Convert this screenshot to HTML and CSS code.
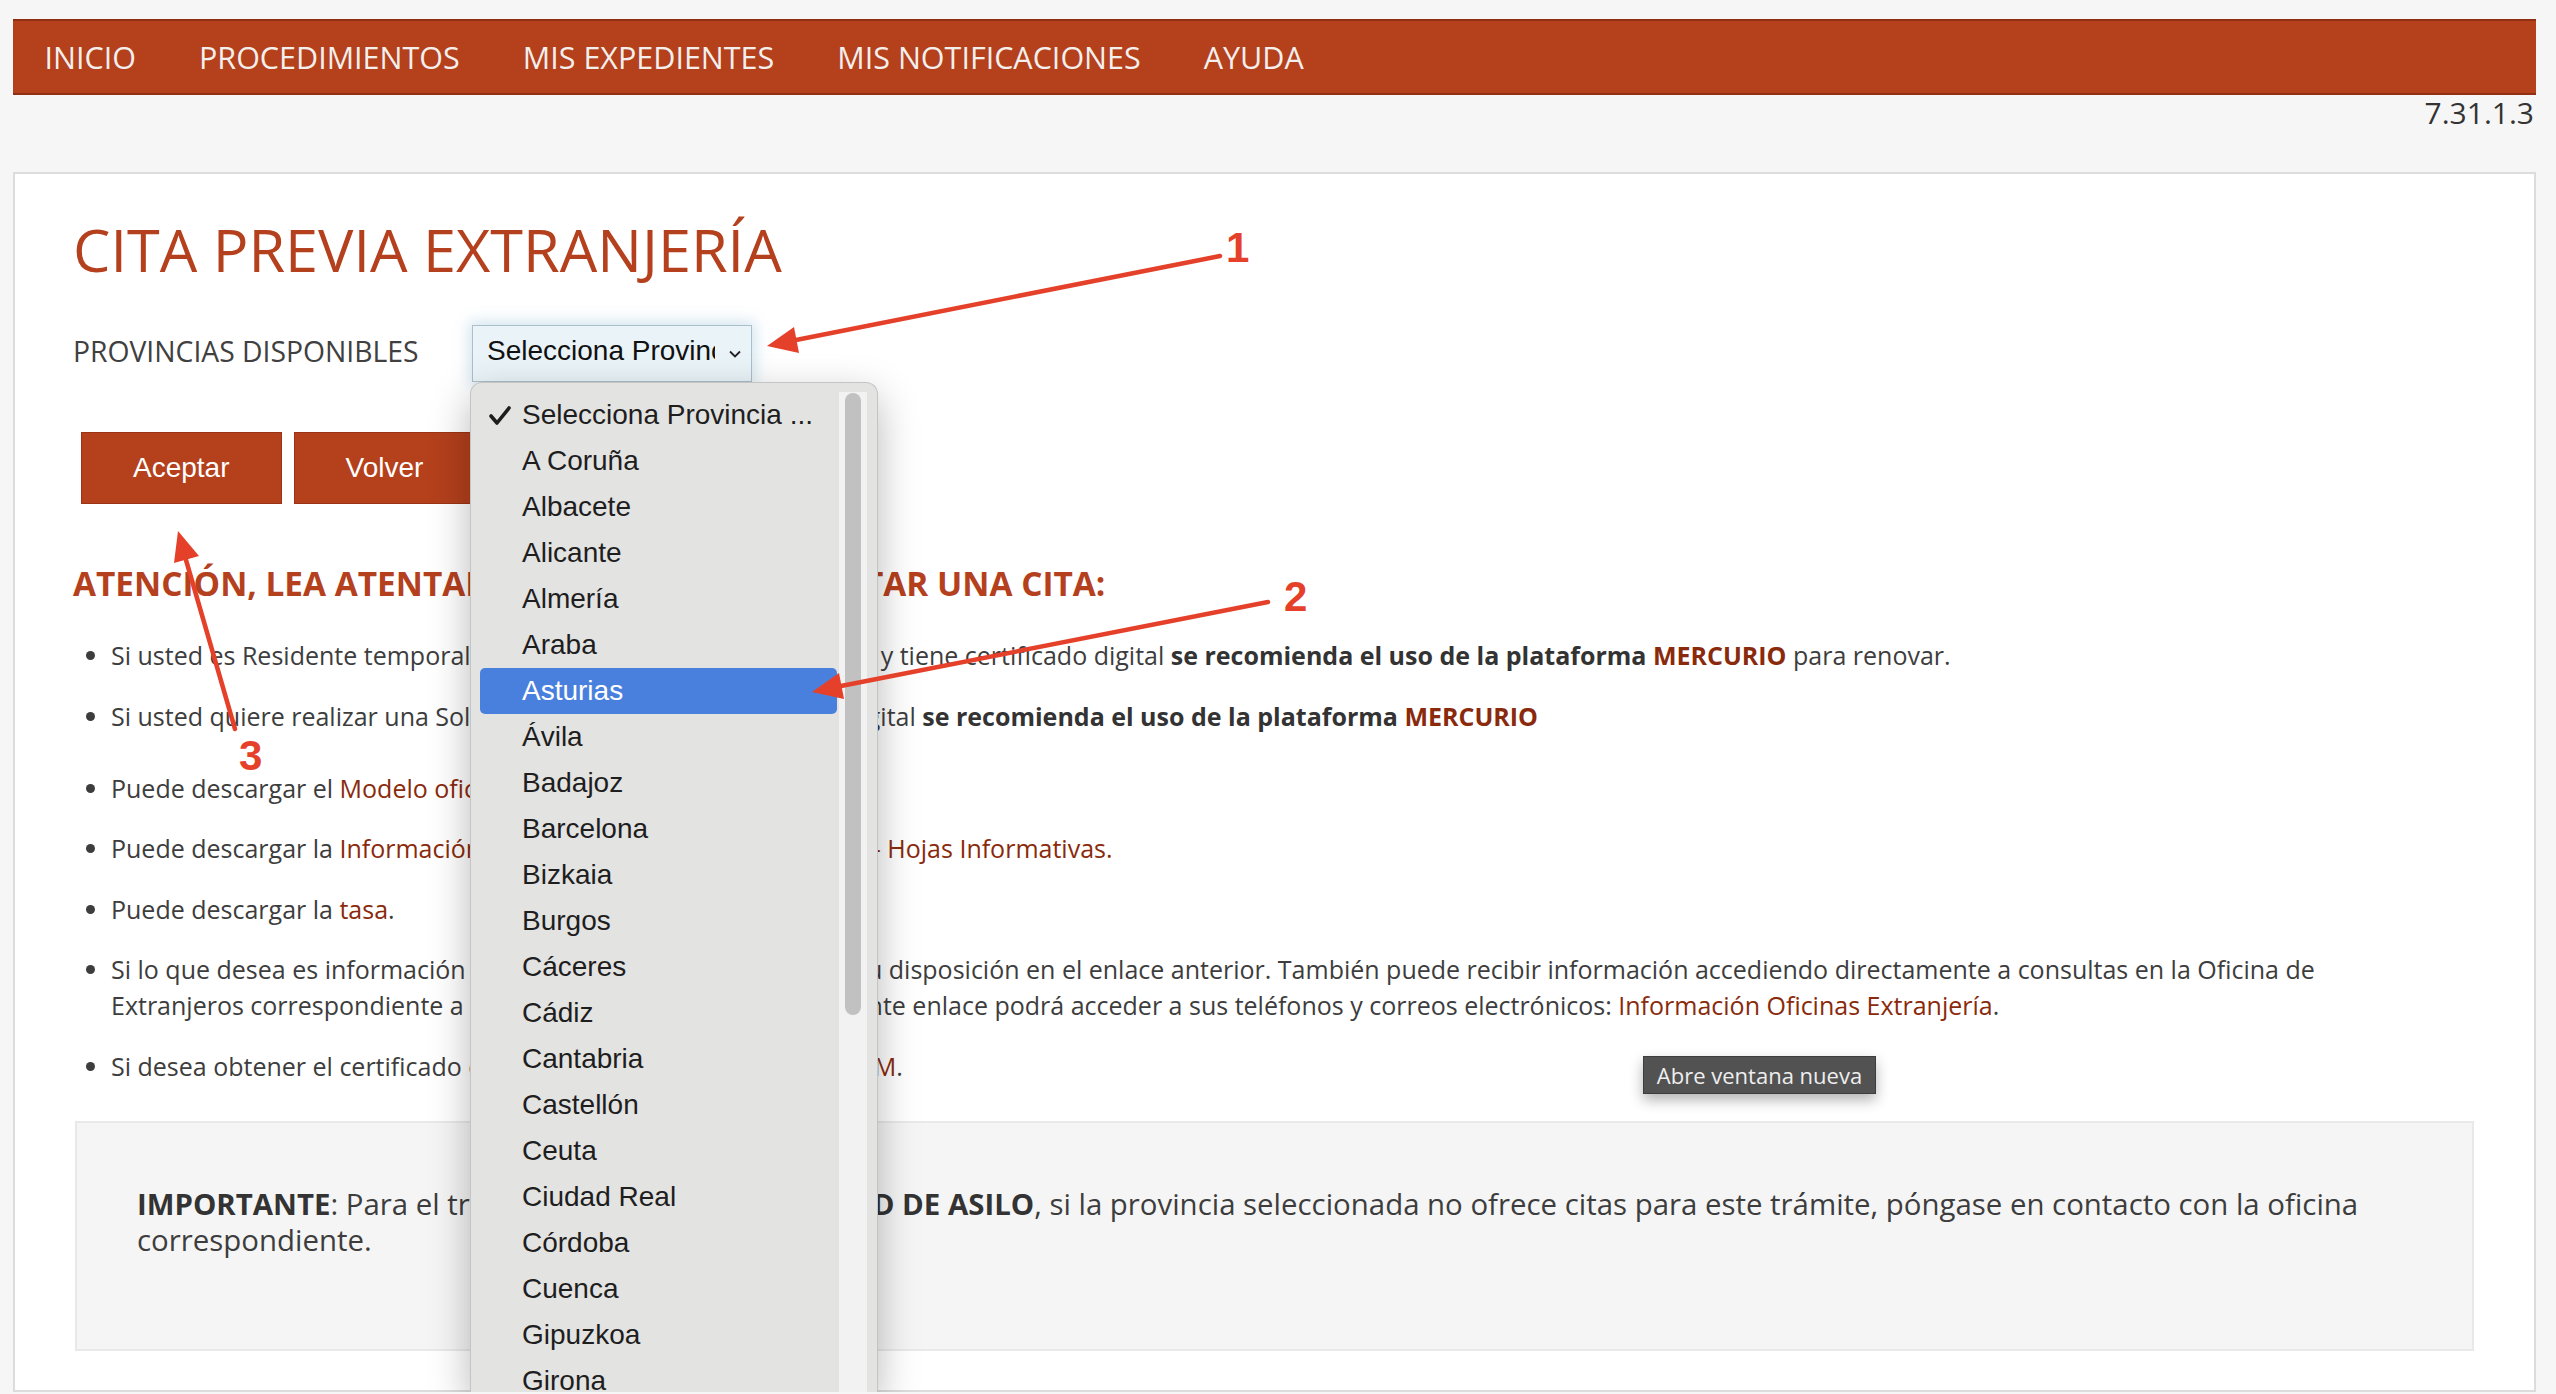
FILE: index.html
```html
<!DOCTYPE html>
<html lang="es">
<head>
<meta charset="utf-8">
<title>Cita Previa Extranjería</title>
<link rel="stylesheet" href="styles.css">
</head>
<body>
<nav class="topnav">
  <ul>
    <li><a href="#">INICIO</a></li>
    <li><a href="#">PROCEDIMIENTOS</a></li>
    <li><a href="#">MIS EXPEDIENTES</a></li>
    <li><a href="#">MIS NOTIFICACIONES</a></li>
    <li><a href="#">AYUDA</a></li>
  </ul>
</nav>
<div class="version">7.31.1.3</div>

<main class="panel">
  <h1 class="title">CITA PREVIA EXTRANJERÍA</h1>

  <div class="form-row">
    <label class="field-label">PROVINCIAS DISPONIBLES</label>
    <div class="select-wrap">
      <div class="select">
        <span class="select-text">Selecciona Provincia ...</span>
        <svg class="chevron" width="12" height="8" viewBox="0 0 12 8"><polyline points="1,1.5 6,6.5 11,1.5" fill="none" stroke="#222" stroke-width="1.8"/></svg>
      </div>
      <div class="popup" role="listbox">
        <ul class="options">
          <li class="option"><svg class="check" width="22" height="19" viewBox="0 0 22 19"><polyline points="2,10 8,17 20,2" fill="none" stroke="#1e1e1e" stroke-width="3.6" stroke-linecap="round" stroke-linejoin="round"/></svg>Selecciona Provincia ...</li>
          <li class="option">A Coruña</li>
          <li class="option">Albacete</li>
          <li class="option">Alicante</li>
          <li class="option">Almería</li>
          <li class="option">Araba</li>
          <li class="option selected">Asturias</li>
          <li class="option">Ávila</li>
          <li class="option">Badajoz</li>
          <li class="option">Barcelona</li>
          <li class="option">Bizkaia</li>
          <li class="option">Burgos</li>
          <li class="option">Cáceres</li>
          <li class="option">Cádiz</li>
          <li class="option">Cantabria</li>
          <li class="option">Castellón</li>
          <li class="option">Ceuta</li>
          <li class="option">Ciudad Real</li>
          <li class="option">Córdoba</li>
          <li class="option">Cuenca</li>
          <li class="option">Gipuzkoa</li>
          <li class="option">Girona</li>
          <li class="option">Granada</li>
        </ul>
        <div class="scroll-track"><div class="scroll-thumb"></div></div>
      </div>
    </div>
  </div>

  <div class="buttons">
    <button class="btn">Aceptar</button>
    <button class="btn">Volver</button>
  </div>

  <h2 class="notice-title">ATENCIÓN, LEA ATENTAMENTE ANTES DE SOLICITAR UNA CITA:</h2>

  <ul class="info-list">
    <li>Si usted es Residente temporal, trabajo por cuenta ajena o propia y tiene certificado digital <strong>se recomienda el uso de la plataforma <a href="#">MERCURIO</a></strong> para renovar.</li>
    <li class="spaced">Si usted quiere realizar una Solicitud inicial, y posee certificado digital <strong>se recomienda el uso de la plataforma <a href="#">MERCURIO</a></strong></li>
    <li>Puede descargar el <a href="#">Modelo oficial de solicitud</a>.</li>
    <li>Puede descargar la <a href="#">Información sobre los trámites de extranjería - Hojas Informativas.</a></li>
    <li>Puede descargar la <a href="#">tasa</a>.</li>
    <li>Si lo que desea es información general sobre trámites la tiene a su disposición en el enlace anterior. También puede recibir información accediendo directamente a consultas en la Oficina de Extranjeros correspondiente a su domicilio. Pulsando en el siguiente enlace podrá acceder a sus teléfonos y correos electrónicos: <a href="#">Información Oficinas Extranjería</a>.</li>
    <li>Si desea obtener el certificado digital podrá acceder a la <a href="#">FNMT-RCM</a>.</li>
  </ul>

  <div class="important">
    <p><strong>IMPORTANTE</strong>: Para el trámite de <strong>POLICÍA - SOLICITUD DE ASILO</strong>, si la provincia seleccionada no ofrece citas para este trámite, póngase en contacto con la oficina correspondiente.</p>
  </div>
</main>

<div class="tooltip">Abre ventana nueva</div>

<svg class="annotations" width="2556" height="1394" viewBox="0 0 2556 1394">
  <g stroke="#e5402a" stroke-width="4.5" stroke-linecap="round">
    <line x1="1220" y1="256" x2="796" y2="340"/>
    <line x1="1268" y1="602" x2="841" y2="686"/>
    <line x1="235" y1="729" x2="186" y2="560"/>
  </g>
  <g fill="#e5402a">
    <polygon points="767,346 799,353 794,327"/>
    <polygon points="812,692 844,699 839,673"/>
    <polygon points="178,531 199,556 174,563"/>
  </g>
  <g fill="#e5402a" font-family="Liberation Sans, Arial, sans-serif" font-weight="700" font-size="42">
    <text x="1226" y="262">1</text>
    <text x="1284" y="611">2</text>
    <text x="239" y="770">3</text>
  </g>
</svg>
</body>
</html>
```

FILE: styles.css
```css
* { box-sizing: border-box; }

html { overflow: hidden; }

html, body { margin: 0; }

body {
  position: relative;
  background: #f6f6f6;
  padding: 19px 20px 0 13px;
  font-family: "Open Sans", "Liberation Sans", sans-serif;
  color: #3d3d3d;
}

/* Top navigation */
.topnav {
  height: 76px;
  background: #b4401c;
  border-top: 2px solid #8f3013;
  border-bottom: 2px solid #8f3013;
}
.topnav ul {
  list-style: none;
  margin: 0;
  padding: 0;
  height: 100%;
  display: flex;
  align-items: center;
}
.topnav a {
  display: block;
  padding: 0 31.5px;
  color: #f3efec;
  font-size: 30.5px;
  text-decoration: none;
}

.version {
  text-align: right;
  font-size: 30px;
  line-height: 36px;
  color: #333;
  padding-right: 2px;
  margin-bottom: 41px;
}

/* Main panel */
.panel {
  background: #fff;
  border: 2px solid #dcdcdc;
  padding: 40px 60px 39px 58px;
}

.title {
  margin: 0;
  font-size: 59.4px;
  line-height: 70px;
  font-weight: 400;
  color: #b5401d;
}

.form-row {
  display: flex;
  align-items: center;
  height: 57px;
  margin-top: 41px;
}
.field-label {
  width: 399px;
  padding-bottom: 5px;
  font-size: 28.3px;
  color: #404040;
}

.select-wrap {
  position: relative;
}
.select {
  width: 280px;
  height: 57px;
  display: flex;
  align-items: center;
  padding: 0 0 5px 14px;
  background: #e9f3f8;
  border: 1px solid #abbfca;
  box-shadow: 0 0 14px 3px rgba(120, 175, 205, 0.35);
  font-family: "Liberation Sans", Arial, sans-serif;
  font-size: 28px;
  color: #111;
}
.select-text {
  width: 228px;
  overflow: hidden;
  white-space: nowrap;
}
.chevron {
  margin: 5px 0 0 14px;
  flex: none;
}

/* Native-like popup list */
.popup {
  position: absolute;
  z-index: 20;
  left: -2px;
  top: 57px;
  width: 408px;
  height: 1012px;
  display: flex;
  align-items: flex-start;
  padding: 9px 0 0 9px;
  background: #e3e3e2;
  border: 1px solid #c4c4c4;
  border-bottom: none;
  border-radius: 12px 12px 0 0;
  box-shadow: 0 14px 40px rgba(0, 0, 0, 0.28);
  overflow: hidden;
}
.options {
  list-style: none;
  margin: 0;
  padding: 0;
  width: 357px;
  flex: none;
}
.option {
  position: relative;
  height: 46px;
  line-height: 46px;
  padding-left: 42px;
  border-radius: 5px;
  font-family: "Liberation Sans", Arial, sans-serif;
  font-size: 28px;
  color: #1e1e1e;
  white-space: nowrap;
}
.option.selected {
  background: #4a80dd;
  color: #fff;
}
.check {
  position: absolute;
  left: 9px;
  top: 14px;
}
.scroll-track {
  flex: none;
  width: 28px;
  height: 1010px;
  margin-left: 2px;
  padding: 1px 6px 0;
  background: #f2f2f2;
}
.scroll-thumb {
  width: 16px;
  height: 622px;
  border-radius: 8px;
  background: #c1c1c1;
}

/* Buttons */
.buttons {
  display: flex;
  gap: 12px;
  margin-top: 50px;
  padding-left: 8px;
}
.btn {
  height: 72px;
  padding: 0 51px;
  background: #b4401c;
  border: 1px solid #9b3416;
  color: #fff;
  font-family: "Liberation Sans", Arial, sans-serif;
  font-size: 28px;
}

.notice-title {
  margin: 60px 0 0;
  font-size: 33.4px;
  line-height: 38px;
  font-weight: 700;
  color: #b5401d;
}

.info-list {
  margin: 35px 60px 0 0;
  padding-left: 38px;
  font-size: 25px;
  line-height: 36px;
}
.info-list li {
  margin-bottom: 24.5px;
}
.info-list li.spaced {
  margin-bottom: 36px;
}
.info-list li:last-child {
  margin-bottom: 0;
}
.info-list strong {
  color: #333;
}
.info-list a,
.important a {
  color: #8a2a0c;
  text-decoration: none;
}

.important {
  margin: 37px 0 0 2px;
  padding: 63px 60px 91px;
  background: #f5f5f5;
  border: 2px solid #e9e9e9;
  font-size: 29.4px;
  line-height: 36px;
  color: #3d3d3d;
}
.important p {
  margin: 0;
}
.important strong {
  color: #333;
}

/* Tooltip over content */
.tooltip {
  position: absolute;
  z-index: 30;
  left: 1643px;
  top: 1056px;
  width: 233px;
  height: 38px;
  background: #525252;
  border: 1px solid #3d3d3d;
  color: #eeeeee;
  font-size: 22px;
  line-height: 36px;
  text-align: center;
  box-shadow: 0 6px 14px rgba(0, 0, 0, 0.3);
}

/* Screenshot annotations */
.annotations {
  position: absolute;
  z-index: 50;
  left: 0;
  top: 0;
  pointer-events: none;
}
```
